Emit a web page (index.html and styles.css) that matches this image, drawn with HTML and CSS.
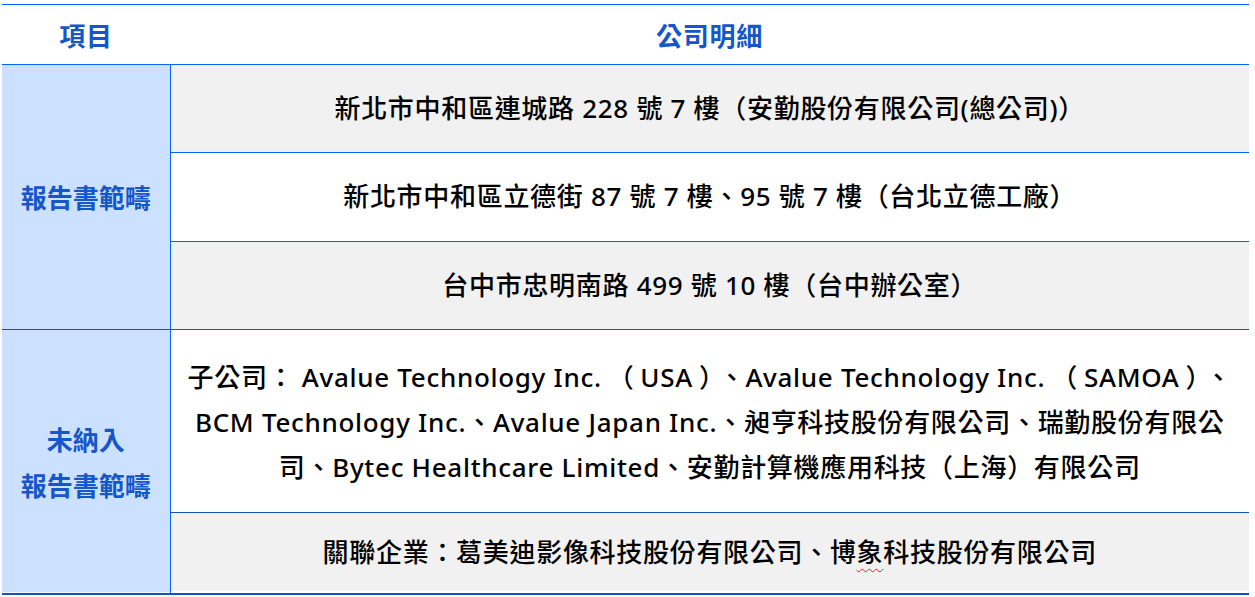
FILE: index.html
```html
<!DOCTYPE html>
<html lang="zh-Hant">
<head>
<meta charset="utf-8">
<title>公司明細</title>
<link rel="stylesheet" href="styles.css">
</head>
<body>
<table class="scope">
  <thead>
    <tr class="head-row">
      <th class="col-item">項目</th>
      <th class="col-detail">公司明細</th>
    </tr>
  </thead>
  <tbody>
    <tr class="row-a">
      <th class="label" rowspan="3">報告書範疇</th>
      <td class="cell gray">新北市中和區連城路 228 號 7 樓（安勤股份有限公司(總公司)）</td>
    </tr>
    <tr class="row-b">
      <td class="cell">新北市中和區立德街 87 號 7 樓、95 號 7 樓（台北立德工廠）</td>
    </tr>
    <tr class="row-c">
      <td class="cell gray">台中市忠明南路 499 號 10 樓（台中辦公室）</td>
    </tr>
    <tr class="row-d group-start">
      <th class="label label-two" rowspan="2">未納入<br>報告書範疇</th>
      <td class="cell multi">子公司： Avalue Technology Inc.<span class="pp">（</span>USA<span class="pp">）</span>、Avalue Technology Inc.<span class="pp">（</span>SAMOA<span class="pp">）</span>、<br>BCM Technology Inc.、Avalue Japan Inc.、昶亨科技股份有限公司、瑞勤股份有限公<br>司、Bytec Healthcare Limited、安勤計算機應用科技（上海）有限公司</td>
    </tr>
    <tr class="row-e">
      <td class="cell gray last">關聯企業：葛美迪影像科技股份有限公司、博<span class="spell">象</span>科技股份有限公司</td>
    </tr>
  </tbody>
</table>
</body>
</html>
```

FILE: styles.css
```css
html, body {
  margin: 0;
  padding: 0;
  background: #ffffff;
}

body {
  padding: 4px 0 0 2px;
  font-family: "Noto Sans", "Noto Sans CJK TC", sans-serif;
  color: #000;
}

.scope {
  width: 1247px;
  border-collapse: collapse;
  table-layout: fixed;
  border-top: 1px solid #0066ff;
  border-bottom: 2px solid #1452c0;
}

.scope th,
.scope td {
  padding: 0;
  font-size: 26px;
  line-height: 1.2;
  text-align: center;
  vertical-align: middle;
}

.head-row {
  height: 60px;
}

.head-row th {
  font-weight: 700;
  color: #1556c8;
  letter-spacing: 0.7px;
  border-bottom: 1px solid #0066ff;
  font-family: "Noto Sans CJK TC", sans-serif;
}

.col-item {
  width: 168px;
}

.label {
  background: #cce0ff;
  color: #1556c8;
  font-weight: 700;
  font-family: "Noto Sans CJK TC", sans-serif;
  border-right: 1px solid #0066ff;
}

.label-two {
  line-height: 46px !important;
  padding-top: 2px !important;
  box-shadow: inset 0 -1px 0 #eef4ff;
}

.cell {
  background: #ffffff;
  font-weight: 500;
  letter-spacing: 0.7px;
  border-bottom: 1px solid #0066ff;
  padding: 0 12px !important;
}

.cell.gray {
  background: #f1f1f1;
}

.row-a { height: 88px; }
.row-b { height: 89px; }
.row-c { height: 88px; }
.row-d { height: 183px; }
.row-e { height: 81px; }

.row-c .cell {
  border-bottom: 1px solid #1452c0;
}

.group-start .label {
  border-top: 1px solid #1452c0;
}

.cell.multi {
  line-height: 45px;
  border-bottom: 1px solid #1452c0;
  padding-top: 2px !important;
}

.pp {
  margin: 0 6px;
}

.cell.last {
  border-bottom: none;
  box-shadow: inset 0 -2px 0 #ffffff;
}

.spell {
  text-decoration: underline wavy #e02020;
  text-decoration-thickness: 1px;
  text-underline-offset: 6px;
}
```
